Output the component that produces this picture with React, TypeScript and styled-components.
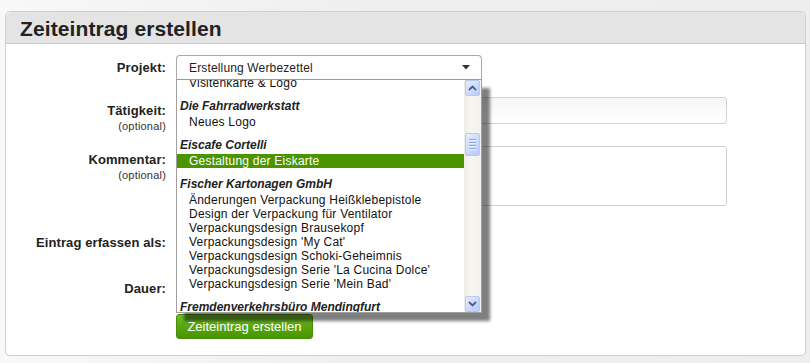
import { useLayoutEffect, useRef } from "react";
import styled, { createGlobalStyle } from "styled-components";

interface Group {
  name?: string;
  items: string[];
}

// "Visitenkarte & Logo" is the tail of a group scrolled out above
const groups: Group[] = [
  { items: ["Visitenkarte & Logo"] },
  { name: "Die Fahrradwerkstatt", items: ["Neues Logo"] },
  { name: "Eiscafe Cortelli", items: ["Gestaltung der Eiskarte"] },
  {
    name: "Fischer Kartonagen GmbH",
    items: [
      "Änderungen Verpackung Heißklebepistole",
      "Design der Verpackung für Ventilator",
      "Verpackungsdesign Brausekopf",
      "Verpackungsdesign 'My Cat'",
      "Verpackungsdesign Schoki-Geheimnis",
      "Verpackungsdesign Serie 'La Cucina Dolce'",
      "Verpackungsdesign Serie 'Mein Bad'",
    ],
  },
  { name: "Fremdenverkehrsbüro Mendingfurt", items: [] },
];

const selected = "Gestaltung der Eiskarte";

const GlobalStyle = createGlobalStyle`
  html, body {
    margin: 0;
    padding: 0;
  }
  body {
    background: linear-gradient(to right, #f8f8f8 0%, #efefef 45%, #eeeeee 100%);
    font-family: "Liberation Sans", Arial, sans-serif;
    height: 363px;
    overflow: hidden;
  }
`;

export default function App() {
  const viewRef = useRef<HTMLDivElement>(null);

  useLayoutEffect(() => {
    if (viewRef.current) viewRef.current.scrollTop = 4;
  }, []);

  return (
    <>
      <GlobalStyle />
      <Page>
        <Panel>
          <PanelHeader>
            <Title>Zeiteintrag erstellen</Title>
          </PanelHeader>
          <PanelBody>
            <Row $mt={11} $h={25}>
              <Label $center>Projekt:</Label>
              <SelectWrap>
                <SelectBox>
                  <span>Erstellung Werbezettel</span>
                  <svg width="8" height="5" viewBox="0 0 8 5">
                    <path d="M0 0 H8 L4 4.5 Z" fill="#333" />
                  </svg>
                </SelectBox>
                <Dropdown>
                  <ListView ref={viewRef}>
                    {groups.map((g, i) => (
                      <GroupBlock key={i} $first={!g.name}>
                        {g.name && <GroupLabel>{g.name}</GroupLabel>}
                        {g.items.map((it) => (
                          <Option key={it} $active={it === selected}>
                            {it}
                          </Option>
                        ))}
                      </GroupBlock>
                    ))}
                  </ListView>
                  <ScrollBar>
                    <ScrollButton>
                      <svg width="9" height="6" viewBox="0 0 9 6">
                        <path d="M1 5 L4.5 1.5 L8 5" fill="none" stroke="#4d6185" strokeWidth="1.8" />
                      </svg>
                    </ScrollButton>
                    <Track>
                      <Thumb $offset={37}>
                        <Grip />
                        <Grip />
                        <Grip />
                        <Grip />
                      </Thumb>
                    </Track>
                    <ScrollButton>
                      <svg width="9" height="6" viewBox="0 0 9 6">
                        <path d="M1 1 L4.5 4.5 L8 1" fill="none" stroke="#4d6185" strokeWidth="1.8" />
                      </svg>
                    </ScrollButton>
                  </ScrollBar>
                </Dropdown>
              </SelectWrap>
            </Row>

            <Row $mt={17} $h={27}>
              <Label>
                Tätigkeit:
                <Optional>(optional)</Optional>
              </Label>
              <TextInput type="text" />
            </Row>

            <Row $mt={22} $h={60}>
              <Label>
                Kommentar:
                <Optional>(optional)</Optional>
              </Label>
              <TextArea />
            </Row>

            <Row $mt={20} $h={34}>
              <Label $center>Eintrag erfassen als:</Label>
            </Row>

            <Row $mt={15} $h={28}>
              <Label $center>Dauer:</Label>
            </Row>

            <Row $mt={11} $h={25}>
              <Label />
              <SubmitButton>Zeiteintrag erstellen</SubmitButton>
            </Row>
          </PanelBody>
        </Panel>
      </Page>
    </>
  );
}

const Page = styled.div`
  padding: 11px 4px 0 5px;
`;

const Panel = styled.div`
  width: 799px;
  border: 1px solid #cfcfcf;
  border-radius: 5px;
  background: #fff;
`;

const PanelHeader = styled.div`
  height: 31px;
  background: #e4e4e4;
  border-bottom: 1px solid #cdcdcd;
  border-radius: 5px 5px 0 0;
  display: flex;
  align-items: center;
  padding: 0 14px;
`;

const Title = styled.h2`
  margin: 2px 0 0;
  font-size: 21px;
  font-weight: bold;
  color: #222;
  letter-spacing: 0.1px;
`;

const PanelBody = styled.div`
  display: flex;
  flex-direction: column;
  padding: 0 0 16px;
  border-radius: 0 0 5px 5px;
`;

const Row = styled.div<{ $mt: number; $h: number }>`
  display: flex;
  margin-top: ${(p) => p.$mt}px;
  height: ${(p) => p.$h}px;
`;

const Label = styled.div<{ $center?: boolean }>`
  width: 160px;
  margin-right: 10px;
  display: flex;
  flex-direction: column;
  align-items: flex-end;
  justify-content: ${(p) => (p.$center ? "center" : "flex-start")};
  padding-top: ${(p) => (p.$center ? 0 : 6)}px;
  box-sizing: border-box;
  font-size: 13px;
  line-height: 16px;
  font-weight: bold;
  letter-spacing: 0.1px;
  color: #222;
`;

const Optional = styled.span`
  font-size: 11px;
  line-height: 14px;
  font-weight: normal;
  letter-spacing: 0.2px;
  color: #333;
`;

const SelectWrap = styled.div`
  position: relative;
  width: 306px;
  z-index: 2;
`;

const SelectBox = styled.div`
  height: 25px;
  box-sizing: border-box;
  border: 1px solid #a9a9a9;
  border-bottom-color: #9a9a9a;
  border-radius: 4px 4px 0 0;
  background: #fff;
  display: flex;
  align-items: center;
  justify-content: space-between;
  padding: 0 11px 0 12px;
  font-size: 12px;
  letter-spacing: 0.15px;
  color: #222;
`;

const Dropdown = styled.div`
  position: absolute;
  top: 25px;
  left: 0;
  width: 306px;
  height: 233px;
  box-sizing: border-box;
  border: 1px solid #a0a0a0;
  border-top: none;
  background: #fff;
  display: flex;
  box-shadow: 8px 8px 3px rgba(0, 0, 0, 0.5);
`;

const ListView = styled.div`
  position: relative;
  flex: 1;
  overflow: hidden;
`;

const GroupBlock = styled.div<{ $first?: boolean }>`
  padding-top: ${(p) => (p.$first ? 0 : 8)}px;
`;

const GroupLabel = styled.div`
  height: 17px;
  line-height: 17px;
  padding-left: 3px;
  font-size: 12px;
  font-weight: bold;
  font-style: italic;
  color: #222;
  white-space: nowrap;
`;

const Option = styled.div<{ $active?: boolean }>`
  height: 14px;
  line-height: 14px;
  padding-left: 12px;
  font-size: 12px;
  letter-spacing: 0.22px;
  white-space: nowrap;
  color: ${(p) => (p.$active ? "#fff" : "#111")};
  background: ${(p) => (p.$active ? "#4a9400" : "transparent")};
`;

const ScrollBar = styled.div`
  width: 16px;
  padding-left: 1px;
  display: flex;
  flex-direction: column;
  background: linear-gradient(to right, #eeede5, #f6f5f0 40%, #f3f2ec);
`;

const xpButton = `
  box-sizing: border-box;
  width: 15px;
  border: 1px solid #b7c8f2;
  border-radius: 2px;
  background: linear-gradient(135deg, #e6eefe 0%, #c9d8fc 60%, #b7cbf9 100%);
  display: flex;
  align-items: center;
  justify-content: center;
`;

const ScrollButton = styled.div`
  ${xpButton}
  height: 16px;
  flex-shrink: 0;
`;

const Track = styled.div`
  flex: 1;
  display: flex;
  flex-direction: column;
`;

const Thumb = styled.div<{ $offset: number }>`
  ${xpButton}
  margin-top: ${(p) => p.$offset}px;
  height: 23px;
  flex-direction: column;
  gap: 1px;
`;

const Grip = styled.div`
  width: 7px;
  height: 1px;
  background: #8ea6e6;
  border-bottom: 1px solid #eef3ff;
`;

const TextInput = styled.input`
  width: 551px;
  height: 27px;
  box-sizing: border-box;
  margin: 0;
  border: 1px solid #d2d2d2;
  border-radius: 3px;
  background: linear-gradient(to bottom, #f6f6f6, #ffffff);
  outline: none;
`;

const TextArea = styled.textarea`
  width: 551px;
  height: 60px;
  box-sizing: border-box;
  margin: 0;
  border: 1px solid #d2d2d2;
  border-radius: 3px;
  background: #fff;
  resize: none;
  outline: none;
`;

const SubmitButton = styled.button`
  width: 137px;
  height: 25px;
  margin: 0;
  padding: 0;
  border: 1px solid #4b8d0c;
  border-radius: 3px;
  background: linear-gradient(to bottom, #72bc2c 0%, #5aa714 45%, #489500 100%);
  color: #fff;
  font-family: "Liberation Sans", Arial, sans-serif;
  font-size: 13px;
  cursor: pointer;
`;
